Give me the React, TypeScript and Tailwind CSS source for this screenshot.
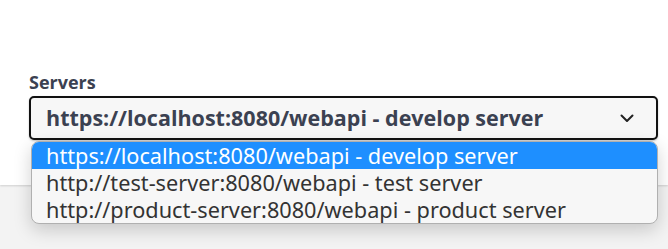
import React from "react";

const options = [
  "https://localhost:8080/webapi - develop server",
  "http://test-server:8080/webapi - test server",
  "http://product-server:8080/webapi - product server",
];

export default function App() {
  return (
    <div className="relative h-[249px] w-[668px] overflow-hidden bg-[#f3f3f3]" style={{ fontFamily: '"Open Sans", "Noto Sans", sans-serif' }}>
      <div className="h-[185px] bg-white px-[29px] pt-[70px] shadow-[0_1px_2px_rgba(0,0,0,0.15)]">
        <div className="text-[18px] font-bold leading-[24px] text-[#3b4151]">Servers</div>
        <div className="mt-[2px] flex h-[44px] w-[629px] items-center justify-between rounded-[5px] border-2 border-[#111] bg-[#f7f7f7] pl-[15px] pr-[22px] shadow-[0_1px_2px_rgba(0,0,0,0.25)]">
          <span className="text-[21.5px] font-bold leading-[28px] text-[#3b4151]">{options[0]}</span>
          <svg width="14" height="9" viewBox="0 0 14 9" fill="none">
            <path d="M1.5 1.5 L7 7 L12.5 1.5" stroke="#222" strokeWidth="2" strokeLinecap="round" strokeLinejoin="round" />
          </svg>
        </div>
      </div>
      <div
        className="absolute left-[31px] top-[141px] w-[627px] overflow-hidden rounded-[8px] border border-[#b0b0b0] bg-[#f7f7f7] shadow-[0_6px_18px_rgba(0,0,0,0.18)]"
        style={{ fontFamily: '"Noto Sans", "Open Sans", sans-serif' }}
      >
        {options.map((o, i) => (
          <div
            key={o}
            className={`h-[27px] pl-[14px] text-[21.7px] leading-[27px] ${i === 0 ? "bg-[#1e8fff] text-white" : "text-[#333]"}`}
          >
            {o}
          </div>
        ))}
      </div>
    </div>
  );
}
